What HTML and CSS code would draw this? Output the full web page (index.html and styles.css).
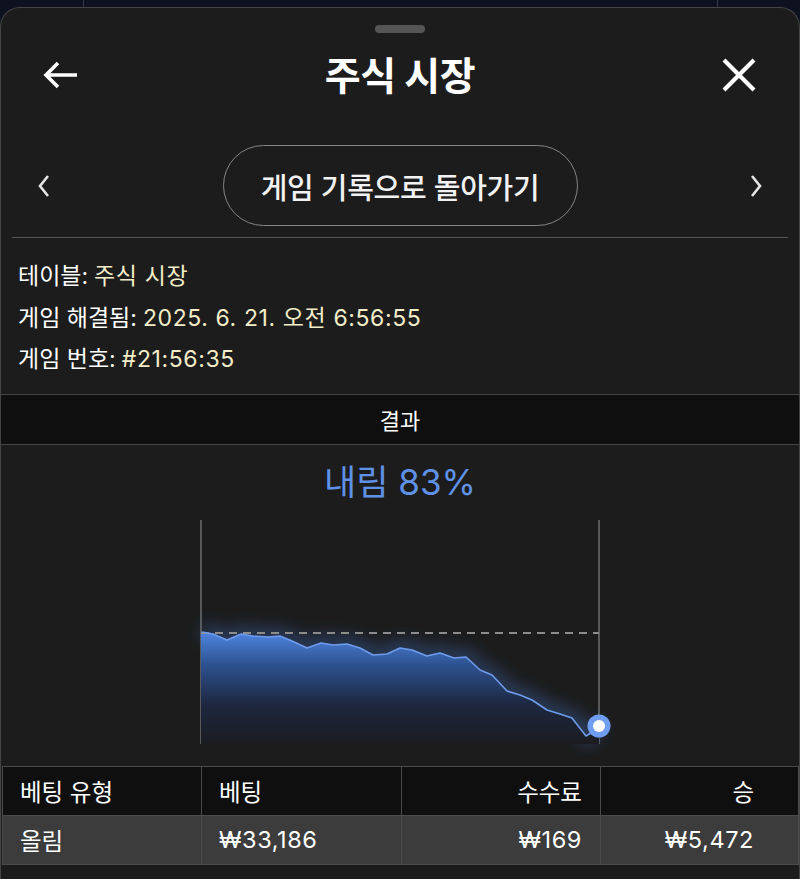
FILE: index.html
```html
<!DOCTYPE html>
<html lang="ko">
<head>
<meta charset="utf-8">
<title>주식 시장</title>
<link rel="stylesheet" href="styles.css">
</head>
<body>
<div class="backdrop"></div>
<section class="sheet">
  <div class="handle"></div>

  <header class="header">
    <button class="icon-btn back" aria-label="뒤로">
      <svg width="36" height="32" viewBox="0 0 36 32"><path d="M15 4 L3 16 L15 28 M3 16 L34 16" fill="none" stroke="#fff" stroke-width="3.6" stroke-linecap="butt" stroke-linejoin="miter"/></svg>
    </button>
    <h1 class="title">주식 시장</h1>
    <button class="icon-btn close" aria-label="닫기">
      <svg width="36" height="34" viewBox="0 0 36 34"><path d="M3 2 L33 32 M33 2 L3 32" fill="none" stroke="#fff" stroke-width="4.2"/></svg>
    </button>
  </header>

  <nav class="nav">
    <button class="chev" aria-label="이전">
      <svg width="14" height="24" viewBox="0 0 14 24"><path d="M11 2 L3 12 L11 22" fill="none" stroke="#e6e6e6" stroke-width="2.6"/></svg>
    </button>
    <button class="pill">게임 기록으로 돌아가기</button>
    <button class="chev" aria-label="다음">
      <svg width="14" height="24" viewBox="0 0 14 24"><path d="M3 2 L11 12 L3 22" fill="none" stroke="#e6e6e6" stroke-width="2.6"/></svg>
    </button>
  </nav>
  <div class="divider"></div>

  <dl class="info">
    <div class="info-row"><dt>테이블:</dt><dd>주식 시장</dd></div>
    <div class="info-row"><dt>게임 해결됨:</dt><dd>2025. 6. 21. 오전 6:56:55</dd></div>
    <div class="info-row"><dt>게임 번호:</dt><dd>#21:56:35</dd></div>
  </dl>

  <div class="band">결과</div>

  <div class="outcome">내림 83%</div>

  <svg class="chart" width="440" height="240" viewBox="180 515 440 240">
    <defs>
      <linearGradient id="areaFill" gradientUnits="userSpaceOnUse" x1="0" y1="633" x2="0" y2="745">
        <stop offset="0" stop-color="#4f85e2"/>
        <stop offset="0.3" stop-color="#2d518e"/>
        <stop offset="0.65" stop-color="#1d2740"/>
        <stop offset="1" stop-color="#1b1c21"/>
      </linearGradient>
      <filter id="glow" x="-20%" y="-40%" width="140%" height="180%">
        <feGaussianBlur stdDeviation="8"/>
      </filter>
    </defs>
    <line x1="201" y1="521" x2="201" y2="745" stroke="#6e6e6e" stroke-width="1.5"/>
    <line x1="599" y1="521" x2="599" y2="745" stroke="#6e6e6e" stroke-width="1.5"/>
    <polyline class="glow" filter="url(#glow)" fill="none" stroke="#3f6fc4" stroke-opacity="0.4" stroke-width="16"
      points="202,633 213,635 227,641 241,635 253,637 268,638 280,637 292,642 307,649 321,644 333,646 347,645 360,649 373,656 387,655 400,649 412,651 427,657 440,654 454,659 466,658 480,671 492,676 507,692 520,696 532,701 547,711 560,715 572,719 586,737 591,734 599,727"/>
    <path fill="url(#areaFill)"
      d="M201,633 L213,635 L227,641 L241,635 L253,637 L268,638 L280,637 L292,642 L307,649 L321,644 L333,646 L347,645 L360,649 L373,656 L387,655 L400,649 L412,651 L427,657 L440,654 L454,659 L466,658 L480,671 L492,676 L507,692 L520,696 L532,701 L547,711 L560,715 L572,719 L586,737 L591,734 L599,727 L599,745 L201,745 Z"/>
    <line x1="201" y1="634" x2="599" y2="634" stroke="#8c8c8c" stroke-width="2" stroke-dasharray="8 6"/>
    <polyline fill="none" stroke="#6e9cec" stroke-width="1.6" stroke-linejoin="round"
      points="202,633 213,635 227,641 241,635 253,637 268,638 280,637 292,642 307,649 321,644 333,646 347,645 360,649 373,656 387,655 400,649 412,651 427,657 440,654 454,659 466,658 480,671 492,676 507,692 520,696 532,701 547,711 560,715 572,719 586,737 591,734 599,727"/>
    <circle cx="599" cy="727" r="11.5" fill="#6f9df0"/>
    <circle cx="599" cy="727" r="6" fill="#ffffff"/>
  </svg>

  <table class="bets">
    <colgroup>
      <col class="c1"><col class="c2"><col class="c3"><col class="c4">
    </colgroup>
    <thead>
      <tr><th class="l">베팅 유형</th><th class="l">베팅</th><th class="r">수수료</th><th class="r last">승</th></tr>
    </thead>
    <tbody>
      <tr><td class="l">올림</td><td class="l num">₩33,186</td><td class="r num">₩169</td><td class="r last num">₩5,472</td></tr>
    </tbody>
  </table>
</section>
</body>
</html>
```

FILE: styles.css
```css
* { box-sizing: border-box; }

html, body {
  margin: 0;
  padding: 0;
  background: #0e1220;
  font-family: "Inter", "Noto Sans CJK KR", "Noto Sans", sans-serif;
  color: #fff;
}

body {
  height: 879px;
  overflow: hidden;
}

/* page behind the sheet */
.backdrop {
  height: 7px;
  width: 635px;
  margin-left: 83px;
  border-left: 1px solid #343a48;
  border-right: 1px solid #343a48;
}

.sheet {
  background: #1c1c1c;
  border: 1px solid #444;
  border-bottom: none;
  border-radius: 20px 20px 0 0;
  height: 872px;
}

.handle {
  width: 50px;
  height: 8px;
  border-radius: 4px;
  background: #555;
  margin: 17px auto 0;
}

.header {
  height: 84px;
  display: grid;
  grid-template-columns: 1fr auto 1fr;
  align-items: center;
  padding: 0 42px 0 42px;
}

.icon-btn {
  background: none;
  border: 0;
  padding: 0;
  display: flex;
  cursor: pointer;
}

.back { justify-self: start; }
.close { justify-self: end; }

.title {
  margin: 0;
  font-size: 39px;
  font-weight: 700;
  letter-spacing: -0.5px;
  line-height: 1;
}

.nav {
  display: flex;
  align-items: center;
  justify-content: space-between;
  padding: 28px 36px 11px 36px;
}

.chev {
  background: none;
  border: 0;
  padding: 0;
  display: flex;
}

.pill {
  width: 355px;
  height: 81px;
  border: 1.5px solid #858585;
  border-radius: 41px;
  background: transparent;
  color: #f2f2f2;
  font-family: inherit;
  font-size: 29px;
  font-weight: 500;
  letter-spacing: -0.3px;
  padding: 0;
}

.divider {
  height: 1px;
  background: #555;
  margin: 0 11px;
}

.info {
  margin: 0;
  padding: 18px 17px 13px;
}

.info-row {
  display: flex;
  gap: 6px;
  font-size: 23px;
  line-height: 41.5px;
}

.info dt { color: #fff; }
.info dd { margin: 0; color: #f3edc8; letter-spacing: 0.6px; }

.band {
  height: 51px;
  background: #0f0f0f;
  border-top: 1px solid #444;
  border-bottom: 1px solid #444;
  display: flex;
  align-items: center;
  justify-content: center;
  font-size: 22px;
  color: #fff;
}

.outcome {
  padding-top: 15px;
  line-height: 44px;
  text-align: center;
  font-size: 35px;
  color: #5f92e6;
}

.chart {
  display: block;
  margin: 10px auto 0;
}

.bets {
  margin: 12px 1px 0;
  width: 796px;
  border-collapse: collapse;
  table-layout: fixed;
  font-size: 23.5px;
}

.c1 { width: 199px; }
.c2 { width: 200px; }
.c3 { width: 199px; }
.c4 { width: 198px; }

.bets th,
.bets td {
  border: 1px solid #4b4b4b;
  height: 49px;
  padding: 0 18px 0 17px;
  font-weight: 400;
  white-space: nowrap;
}

.bets thead tr { background: #0f0f0f; }
.bets tbody tr { background: #3c3c3c; }

.bets .l { text-align: left; }
.bets .r { text-align: right; }
.bets .last { padding-right: 44px; }
.bets .num { letter-spacing: 0.6px; }
```
